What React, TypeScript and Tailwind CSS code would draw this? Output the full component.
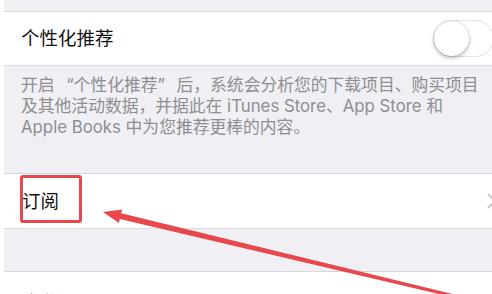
import React from "react";

export default function App() {
  const font = { fontFamily: '"Inter", "Noto Sans CJK SC", sans-serif' };
  return (
    <div
      className="relative w-[492px] h-[294px] overflow-hidden bg-white pl-[4px]"
      style={font}
    >
      <div className="flex flex-col">
        <div className="h-[12px] bg-[#efeff4] border-b border-[#dcdce0]" />
        <div className="h-[54px] bg-white flex items-center pl-[17px] border-b border-[#dcdce0]">
          <span className="text-[18.5px] text-[#111] leading-none">个性化推荐</span>
          <div className="ml-auto mr-[-2px] w-[61px] h-[37px] shrink-0 rounded-full border border-[#e2e2e6] bg-white relative">
            <div className="absolute left-0 top-0 w-[35px] h-[35px] rounded-full bg-white shadow-[0_2px_4px_rgba(0,0,0,0.28),0_0_1px_rgba(0,0,0,0.25)]" />
          </div>
        </div>
        <div className="h-[108px] bg-[#efeff4] border-b border-[#d6d6da] pl-[17px] pt-[9px] text-[16.8px] leading-[21px] text-[#8e8e93] whitespace-nowrap">
          开启<span className="inline-block w-[19px] text-right">“</span>个性化推荐<span className="inline-block w-[19px] text-left">”</span>后，系统会分析您的下载项目、购买项目
          <br />
          及其他活动数据，并据此在 iTunes Store、App Store 和
          <br />
          Apple Books 中为您推荐更棒的内容。
        </div>
        <div className="h-[55px] bg-white flex items-center pl-[18px] border-b border-[#dcdce0]">
          <span className="text-[18.5px] text-[#111] leading-none">订阅</span>
          <svg className="ml-auto mr-[-6px] shrink-0" width="12" height="18" viewBox="0 0 12 18">
            <path d="M2 2 L9 9 L2 16" fill="none" stroke="#c7c7cc" strokeWidth="2" />
          </svg>
        </div>
        <div className="h-[43px] bg-[#efeff4] border-b border-[#d6d6da]" />
        <div className="h-[54px] bg-white pl-[17px] pt-[19px]">
          <span className="text-[18.5px] text-[#111] leading-none">隐私设置</span>
        </div>
      </div>

      <div className="absolute left-[20px] top-[175px] w-[62px] h-[48px] border-[3px] border-[#e8474b] rounded-[3px]" />

      <svg className="absolute left-0 top-0" width="492" height="294" viewBox="0 0 492 294">
        <polygon
          points="103,212 122.1,209.4 121.2,213.3 460.3,295.9 459.7,298.9 119.8,219.1 118.9,223"
          fill="#e8474b"
        />
      </svg>
    </div>
  );
}
